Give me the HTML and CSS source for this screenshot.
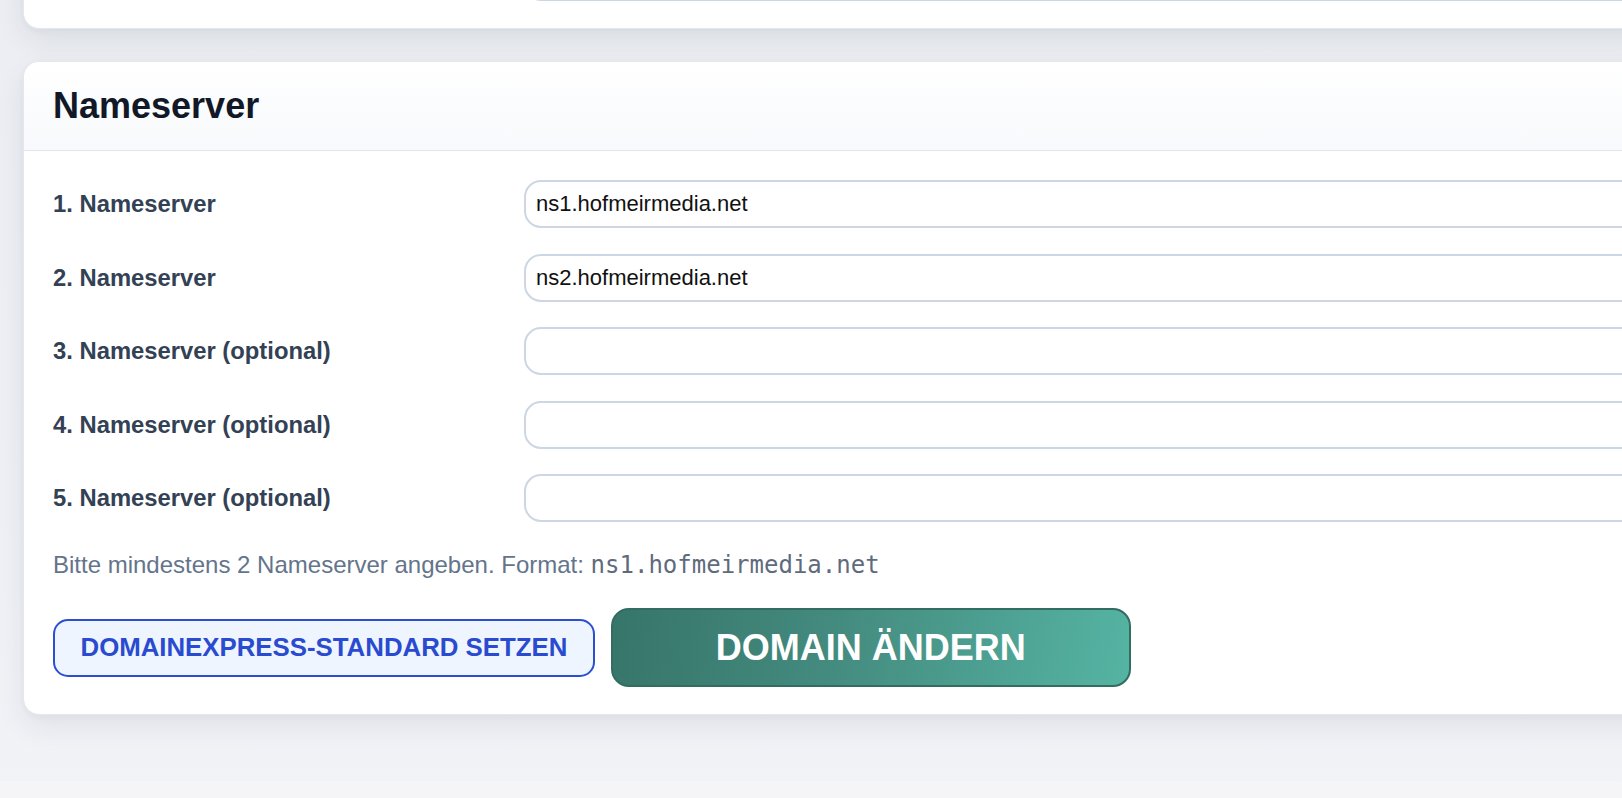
FILE: index.html
```html
<!DOCTYPE html>
<html lang="de">
<head>
<meta charset="utf-8">
<title>Nameserver</title>
<link rel="stylesheet" href="styles.css">
</head>
<body>
<div class="page">
  <section class="card card-prev">
    <div class="card-body">
      <div class="field-row">
        <span class="field-label"></span>
        <input class="field-input" type="text" aria-label="Vorheriges Feld">
      </div>
    </div>
  </section>

  <section class="card">
    <header class="card-header">
      <h2 class="card-title">Nameserver</h2>
    </header>
    <div class="card-body">
      <div class="fields">
        <div class="field-row">
          <label class="field-label" for="ns1">1. Nameserver</label>
          <input class="field-input" id="ns1" type="text" value="ns1.hofmeirmedia.net">
        </div>
        <div class="field-row">
          <label class="field-label" for="ns2">2. Nameserver</label>
          <input class="field-input" id="ns2" type="text" value="ns2.hofmeirmedia.net">
        </div>
        <div class="field-row">
          <label class="field-label" for="ns3">3. Nameserver (optional)</label>
          <input class="field-input" id="ns3" type="text">
        </div>
        <div class="field-row">
          <label class="field-label" for="ns4">4. Nameserver (optional)</label>
          <input class="field-input" id="ns4" type="text">
        </div>
        <div class="field-row">
          <label class="field-label" for="ns5">5. Nameserver (optional)</label>
          <input class="field-input" id="ns5" type="text">
        </div>
      </div>
      <p class="help">Bitte mindestens 2 Nameserver angeben. Format: <code class="mono">ns1.hofmeirmedia.net</code></p>
      <div class="actions">
        <button class="btn btn-outline" type="button">Domainexpress-Standard setzen</button>
        <button class="btn btn-primary" type="submit">Domain ändern</button>
      </div>
    </div>
  </section>
</div>
<div class="footer-strip"></div>
</body>
</html>
```

FILE: styles.css
```css
html, body {
  margin: 0;
  padding: 0;
}

body {
  background: linear-gradient(180deg, #eceef3 0%, #eef0f5 60%, #f2f3f7 100%);
  font-family: "Liberation Sans", Arial, Helvetica, sans-serif;
  overflow: hidden;
  height: 798px;
}

.page {
  width: 1700px;
  padding-left: 23px;
  margin-top: -47px;
  display: flex;
  flex-direction: column;
  gap: 32px;
}

.card {
  background: #ffffff;
  border: 1px solid #e3e7ee;
  border-radius: 16px;
  box-shadow: 0 12px 30px rgba(30, 41, 59, 0.08), 0 2px 6px rgba(30, 41, 59, 0.04);
  overflow: hidden;
}

.card-prev {
  border-top: none;
  border-top-left-radius: 0;
  border-top-right-radius: 0;
}

.card-prev .card-body {
  padding-top: 0;
}

.card-header {
  background: linear-gradient(180deg, #ffffff 0%, #f7f9fc 100%);
  border-bottom: 1px solid #e1e6ef;
  padding: 22px 29px 23px;
}

.card-title {
  margin: 0;
  font-size: 36px;
  line-height: 43px;
  font-weight: 700;
  color: #111827;
}

.card-body {
  padding: 29px 29px 27px;
}

.fields {
  display: flex;
  flex-direction: column;
  gap: 25.5px;
}

.field-row {
  display: grid;
  grid-template-columns: 447px 1fr;
  column-gap: 24px;
  align-items: center;
}

.field-label {
  font-size: 23.8px;
  font-weight: 700;
  color: #334155;
}

.field-input {
  box-sizing: border-box;
  height: 48px;
  width: 100%;
  border: 2px solid #cdd6e4;
  border-radius: 17px;
  background: #ffffff;
  padding: 0 10px;
  font-family: "Liberation Sans", Arial, Helvetica, sans-serif;
  font-size: 22px;
  color: #111111;
  outline: none;
}

.help {
  margin: 27.5px 0 28.5px;
  font-size: 24px;
  line-height: 29px;
  color: #64748b;
}

.mono {
  font-family: "DejaVu Sans Mono", "Liberation Mono", monospace;
  font-size: 24px;
  color: #5f6b7c;
}

.actions {
  display: flex;
  align-items: center;
  gap: 16px;
}

.btn {
  font-family: "Liberation Sans", Arial, Helvetica, sans-serif;
  font-weight: 700;
  text-transform: uppercase;
  cursor: pointer;
}

.btn-outline {
  height: 58px;
  padding: 0 25.5px;
  font-size: 25.8px;
  color: #2a4bd0;
  background: #eef5fe;
  border: 2px solid #2b4fd3;
  border-radius: 15px;
}

.btn-primary {
  width: 520px;
  height: 79px;
  padding: 0 20px;
  font-size: 36px;
  color: #ffffff;
  background: linear-gradient(100deg, #37756a 0%, #43897d 40%, #55b4a3 100%);
  border: 2px solid #336d62;
  border-radius: 18px;
}

.footer-strip {
  height: 40px;
  margin-top: 66px;
  background: #f5f5f7;
}
```
